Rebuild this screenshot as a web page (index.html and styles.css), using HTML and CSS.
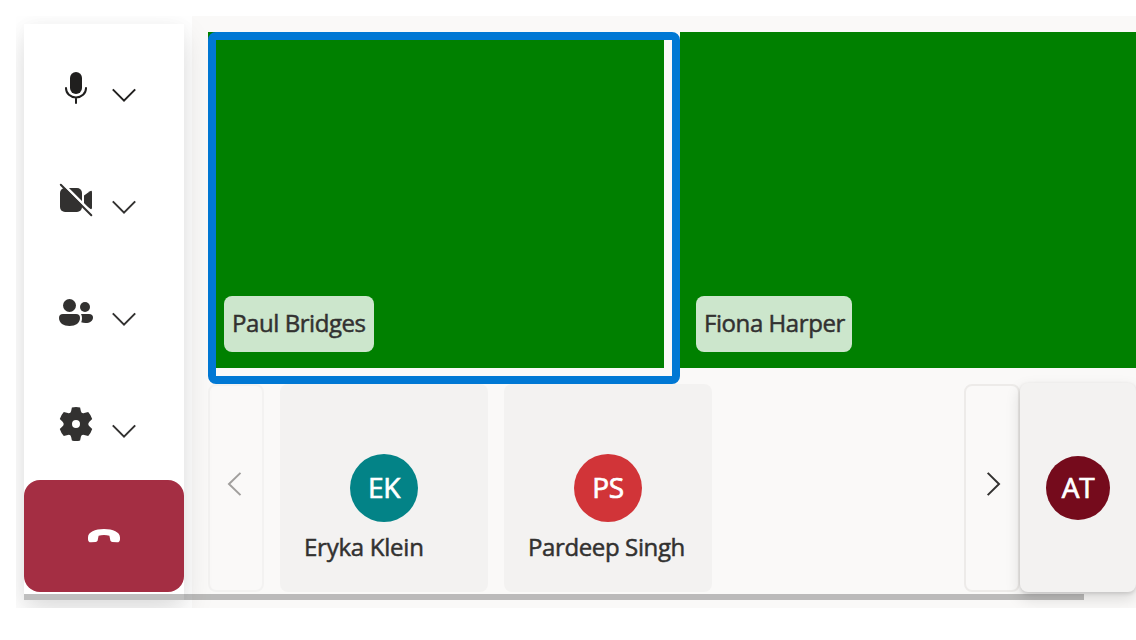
FILE: index.html
```html
<!DOCTYPE html>
<html lang="en">
<head>
<meta charset="utf-8">
<title>Call</title>
<link rel="stylesheet" href="styles.css">
</head>
<body>
<main class="call">
  <nav class="controls">
    <button class="control control-mic" aria-label="Microphone">
      <svg class="icon" viewBox="0 0 40 40"><rect x="14" y="4" width="12" height="22" rx="6" fill="currentColor"/><path d="M10 19.3v1a10 9.2 0 0 0 20 0v-1M20 29.5v6.3" fill="none" stroke="currentColor" stroke-width="2"/></svg>
      <svg class="chevron" viewBox="0 0 24 14"><path d="M.8 1.400 12 12.600 23.200 1.400" /></svg>
    </button>
    <button class="control" aria-label="Camera">
      <svg class="icon" viewBox="0 0 40 40"><rect x="4" y="8" width="22" height="24" rx="5" fill="currentColor"/><path d="M28 15.6 34 11.200q2-1 2 1v15.600q0 2-2 1l-6-4.400z" fill="currentColor"/><path d="M6.500 3.500 38 35" stroke="#fff" stroke-width="2.600"/><path d="M4.800 4.800 35.300 35.300" stroke="currentColor" stroke-width="2" stroke-linecap="round"/></svg>
      <svg class="chevron" viewBox="0 0 24 14"><path d="M.8 1.400 12 12.600 23.200 1.400" /></svg>
    </button>
    <button class="control" aria-label="People">
      <svg class="icon" viewBox="0 0 40 40"><g fill="currentColor"><circle cx="13.500" cy="13.500" r="6.500"/><circle cx="29" cy="15" r="5"/><path d="M7 22h13q4 0 4 4c0 5-4.500 8-10.500 8S3 31 3 26q0-4 4-4z"/><path d="M25 22h8q4 0 4 3.500c0 3.500-3 5.500-7.500 5.500-1.700 0-3-.2-4.300-.7 1-2.300 1.300-5.800-.2-8.300z"/></g></svg>
      <svg class="chevron" viewBox="0 0 24 14"><path d="M.8 1.400 12 12.600 23.200 1.400" /></svg>
    </button>
    <button class="control" aria-label="Settings">
      <svg class="icon" viewBox="0 0 40 40"><path fill="currentColor" fill-rule="evenodd" d="M15.900 3.500Q20 2.500 24.100 3.500L24.900 7.200Q25.500 9.900 28.200 9.100L32.200 8Q35 11.100 36.200 15L33.400 17.700Q31.200 20 33.400 22.300L36.200 25Q35 28.900 32.200 32L28.200 30.900Q25.500 30.100 24.900 32.800L24.100 36.500Q20 37.500 15.900 36.500L15.100 32.800Q14.500 30.100 11.800 30.900L7.800 32Q5 28.900 3.800 25L6.600 22.300Q8.800 20 6.600 17.700L3.800 15Q5 11.100 7.800 8L11.800 9.100Q14.500 9.900 15.100 7.200ZM20 16a4 4 0 1 0 0 8 4 4 0 0 0 0-8z"/></svg>
      <svg class="chevron" viewBox="0 0 24 14"><path d="M.8 1.400 12 12.600 23.200 1.400" /></svg>
    </button>
    <button class="hangup" aria-label="Leave">
      <svg class="phone" viewBox="0 0 32 14"><path d="M16 0c9 0 16 3 16 8.500v1.700c0 2-1.200 3.300-3.200 3.100l-4.400-.4c-1.300-.1-2-.9-2.200-2.200l-.8-3.900c-3.200-1.100-7.600-1.100-10.800 0l-.8 3.900c-.2 1.300-.9 2.100-2.200 2.200l-4.400.4C1.200 13.500 0 12.200 0 10.200V8.500C0 3 7 0 16 0z" fill="#fff"/></svg>
    </button>
  </nav>
  <section class="stage">
    <div class="videos">
      <article class="video speaking"><div class="feed"><span class="name">Paul Bridges</span></div></article>
      <article class="video"><div class="feed"><span class="name name-fiona">Fiona Harper</span></div></article>
    </div>
    <div class="strip">
      <button class="page-button page-prev" aria-label="Previous"><svg class="arrow" viewBox="0 0 14 24"><path d="M12.500 .9 1 12 12.500 23.100"/></svg></button>
      <article class="person"><span class="avatar avatar-teal">EK</span><span class="person-name name-eryka">Eryka Klein</span></article>
      <article class="person"><span class="avatar avatar-red">PS</span><span class="person-name name-pardeep">Pardeep Singh</span></article>
      <button class="page-button page-next" aria-label="Next"><svg class="arrow" viewBox="0 0 14 24"><path d="M.7 .9 12 12 .7 23.100"/></svg></button>
      <article class="self"><span class="avatar avatar-wine">AT</span></article>
    </div>
  </section>
  <div class="scroll-thumb"></div>
</main>
</body>
</html>
```
FILE: styles.css
```css
* { box-sizing: border-box; }
html, body { height: 100%; overflow: hidden; }
body {
  margin: 0;
  padding: 16px 0 0 16px;
  background: #fff;
  color: #323130;
  font-family: "Open Sans", "Noto Sans", sans-serif;
}
button { margin: 0; padding: 0; border: 0; font: inherit; color: inherit; }
svg { display: block; flex: none; }
.call { position: relative; display: flex; height: 592px; overflow: hidden; }
.controls {
  position: relative;
  z-index: 1;
  width: 160px;
  height: 576px;
  margin: 8px 8px 0;
  padding-top: 8px;
  flex: none;
  background: #fff;
  box-shadow: 0 12.800px 28.800px rgba(0,0,0,.13), 0 0 16px rgba(0,0,0,.03);
}
.control {
  display: flex;
  align-items: center;
  gap: 16px;
  width: 100%;
  height: 112px;
  padding-left: 32px;
  background: transparent;
}
.control-mic { color: #201f1e; }
.icon { width: 40px; height: 40px; }
.chevron { width: 24px; height: 14px; margin-top: 14px; overflow: visible; }
.chevron path, .arrow path { fill: none; stroke: currentColor; stroke-width: 2; }
.hangup {
  display: flex;
  align-items: center;
  justify-content: center;
  width: 160px;
  height: 112px;
  border-radius: 16px;
  background: #a42e43;
}
.phone { width: 32px; height: 14px; }
.stage { flex: 1; min-width: 0; padding: 16px 0 0 16px; background: #faf9f8; }
.videos { display: flex; height: 352px; }
.video { position: relative; flex: none; width: 472px; padding: 0 16px 16px 0; }
.speaking::after {
  content: "";
  position: absolute;
  inset: 0;
  border: 8px solid #0078d4;
  border-radius: 8px;
}
.feed { display: flex; align-items: flex-end; height: 336px; padding: 16px; background: #008000; }
.name {
  height: 56px;
  width: 150px;
  padding: 0 8px;
  border-radius: 8px;
  background: rgba(255,255,255,.8);
  font-size: 24px;
  font-weight: 400;
  -webkit-text-stroke: .5px currentColor;
  letter-spacing: -.43px;
  line-height: 54px;
  white-space: nowrap;
}
.name-fiona { width: 156px; }
.strip { display: flex; height: 208px; }
.page-button {
  display: flex;
  align-items: center;
  justify-content: center;
  flex: none;
  width: 56px;
  height: 208px;
  border: 2px solid #edebe9;
  border-radius: 8px;
  background: #faf9f8;
}
.page-prev { border-color: #f3f2f1; color: #a19f9d; }
.page-prev .arrow { margin: -8px 2px 0 0; }
.page-next { margin-left: auto; }
.page-next .arrow { margin: -8px 0 0 3px; }
.arrow { width: 14px; height: 24px; overflow: visible; }
.person {
  display: flex;
  flex-direction: column;
  align-items: center;
  flex: none;
  width: 208px;
  height: 208px;
  margin-left: 16px;
  padding-top: 70px;
  border-radius: 8px;
  background: #f3f2f1;
}
.avatar {
  display: flex;
  align-items: center;
  justify-content: center;
  flex: none;
  width: 68px;
  height: 68px;
  padding-bottom: 2px;
  border-radius: 50%;
  color: #fff;
  font-size: 28px;
  font-weight: 400;
  -webkit-text-stroke: .7px currentColor;
  letter-spacing: -.3px;
}
.avatar-teal { background: #038387; }
.avatar-red { background: #d13438; }
.avatar-wine { width: 64px; height: 64px; background: #750b1c; }
.person-name {
  align-self: flex-start;
  margin: 9px 0 0 24px;
  font-size: 24px;
  font-weight: 400;
  -webkit-text-stroke: .5px currentColor;
  letter-spacing: -.38px;
  line-height: 32px;
  white-space: nowrap;
}
.name-eryka { letter-spacing: -.25px; }
.self {
  position: relative;
  display: flex;
  justify-content: center;
  flex: none;
  width: 116px;
  height: 209px;
  margin-top: -1px;
  padding-top: 73px;
  border-radius: 8px;
  background: #f3f2f1;
  box-shadow: 0 6.400px 14.400px rgba(0,0,0,.13), 0 1.200px 3.600px rgba(0,0,0,.11);
}
.scroll-thumb {
  position: absolute;
  z-index: 2;
  left: 8px;
  top: 578px;
  width: 1060px;
  height: 6px;
  background: rgba(0,0,0,.25);
}
```
